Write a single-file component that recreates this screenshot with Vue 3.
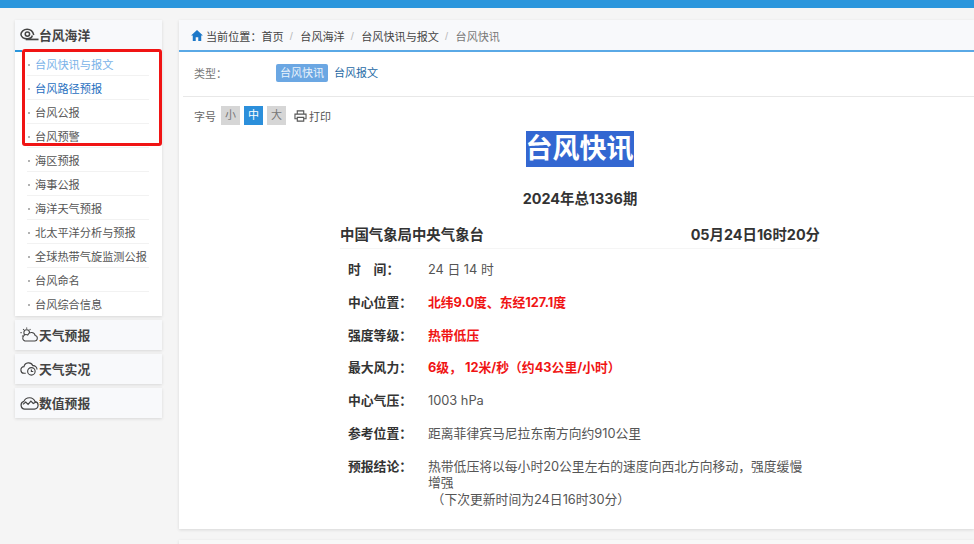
<template>
  <div class="page">
    <div class="topbar"></div>
    <div class="wrap">
      <aside class="side">
        <div class="group open">
          <div class="group-head">
            <svg class="head-icon" viewBox="0 0 20 14" fill="none" stroke="#444" stroke-width="1.6">
              <path d="M14.500 7.500C13.500 3.500 10.500 1.500 7.500 1.500 4 1.500 1 4 1 6.800c0 2.700 3 4.700 6.500 4.700 3 0 5-1.500 5.500-3.500" />
              <circle cx="7.800" cy="6.600" r="2.300" />
              <path d="M6 12.200h13.500" stroke-width="1.800" />
            </svg>
            <span>台风海洋</span>
          </div>
          <ul class="menu">
            <li v-for="(item, i) in menu" :key="item" :class="{ hover: i === 0, active: i === 1 }">{{ item }}</li>
          </ul>
          <div class="mark"></div>
        </div>
        <div class="group">
          <div class="group-head">
            <svg class="head-icon" viewBox="0 0 20 16" fill="none" stroke="#444" stroke-width="1.100">
              <circle cx="7" cy="6" r="3" />
              <path d="M7 .6v1.200M1.600 6H.4M3.200 2.200l.9.9M2 10l1-.8M11 2.200l-.8.9" />
              <path d="M5 15h10.500a3 3 0 0 0 .6-5.900 4.200 4.200 0 0 0-8-.6A3.300 3.300 0 0 0 5 15z" fill="#f8f9fb" />
            </svg>
            <span>天气预报</span>
          </div>
        </div>
        <div class="group">
          <div class="group-head">
            <svg class="head-icon" viewBox="0 0 20 16" fill="none" stroke="#444" stroke-width="1.200">
              <path d="M6 13H4.500a3.500 3.500 0 0 1-.4-7A5 5 0 0 1 13.600 5a4 4 0 0 1 4.400 4" />
              <circle cx="12" cy="11" r="4" />
              <path d="M12 9v2.200h2" />
            </svg>
            <span>天气实况</span>
          </div>
        </div>
        <div class="group">
          <div class="group-head">
            <svg class="head-icon" viewBox="0 0 20 16" fill="none" stroke="#444" stroke-width="1.300">
              <path d="M5 15h10a4 4 0 0 0 1-7.900A6.500 6.500 0 0 0 4 6.800 4.200 4.200 0 0 0 5 15z" />
              <path d="M3 10l3-2.500 2.500 2.500 3-3.500 2.500 2.500 3-1.500" />
            </svg>
            <span>数值预报</span>
          </div>
        </div>
        <div class="red-box"></div>
      </aside>

      <main class="content">
        <section class="card">
          <div class="crumbs">
            <svg class="home" viewBox="0 0 14 13"><path fill="#1d78c8" d="M7 0 0 6.500h2V13h3.500V8.500h3V13H12V6.500h2z" /></svg>
            <span class="crumb-label">当前位置：</span>
            <span>首页</span><i>/</i>
            <span>台风海洋</span><i>/</i>
            <span>台风快讯与报文</span><i>/</i>
            <span class="last">台风快讯</span>
          </div>
          <div class="types">
            <span class="type-label">类型：</span>
            <span class="tag on">台风快讯</span>
            <span class="tag">台风报文</span>
          </div>
          <div class="tools">
            <span class="tool-label">字号</span>
            <span class="size">小</span>
            <span class="size on">中</span>
            <span class="size">大</span>
            <svg class="printer" viewBox="0 0 14 13" fill="none" stroke="#555" stroke-width="1.200">
              <path d="M3.500 4V1h7v3M3.500 9.500H1V4.500h12v5h-2.500" />
              <path d="M3.500 8h7v4h-7z" />
            </svg>
            <span class="print">打印</span>
          </div>

          <article class="report">
            <h1><span>台风快讯</span></h1>
            <h2>2024年总1336期</h2>
            <div class="source">
              <span>中国气象局中央气象台</span>
              <span>05月24日16时20分</span>
            </div>
            <dl class="rows">
              <div v-for="row in rows" :key="row.label" class="row">
                <dt>{{ row.label }}</dt>
                <dd :class="{ warn: row.warn }">{{ row.value }}</dd>
              </div>
              <div class="row">
                <dt>预报结论：</dt>
                <dd>热带低压将以每小时20公里左右的速度向西北方向移动，强度缓慢增强<br />&nbsp;（下次更新时间为24日16时30分）</dd>
              </div>
            </dl>
          </article>
        </section>
        <div class="card next"></div>
      </main>
    </div>
  </div>
</template>

<script setup>
const menu = ['台风快讯与报文', '台风路径预报', '台风公报', '台风预警', '海区预报', '海事公报', '海洋天气预报', '北太平洋分析与预报', '全球热带气旋监测公报', '台风命名', '台风综合信息']

const rows = [
  { label: '时　间：', value: '24 日 14 时' },
  { label: '中心位置：', value: '北纬9.0度、东经127.1度', warn: true },
  { label: '强度等级：', value: '热带低压', warn: true },
  { label: '最大风力：', value: '6级， 12米/秒（约43公里/小时）', warn: true },
  { label: '中心气压：', value: '1003 hPa' },
  { label: '参考位置：', value: '距离菲律宾马尼拉东南方向约910公里' },
]
</script>

<style>
html, body { margin: 0; background: #f5f5f5; }
</style>

<style scoped>
.page {
  height: 544px;
  overflow: hidden;
  background: #f5f5f5;
  color: #333;
  font: 12px "Liberation Sans", "Noto Sans CJK SC", sans-serif;
}
.topbar { height: 8px; background: #2b96dc; }
.wrap { display: flex; gap: 17px; padding: 12px 0 0 15px; }

.side { position: relative; width: 147px; flex: none; display: flex; flex-direction: column; gap: 4px; }
.group { position: relative; background: #f8f9fb; box-shadow: 0 1px 3px rgba(0,0,0,.12); }
.group.open { background: #fff; }
.group-head {
  display: flex; align-items: center;
  box-sizing: border-box;
  height: 30px; padding: 0 0 2px 5px;
  font-size: 12.8px; font-weight: bold; color: #444;
  background: #f8f9fb;
}
.head-icon { width: 19px; height: 15px; flex: none; }
.menu { list-style: none; margin: 0; padding: 2px 13px 0 12px; }
.menu li {
  position: relative;
  height: 24px; line-height: 26px;
  padding-left: 8px;
  font-size: 11.2px; color: #555;
  white-space: nowrap;
  border-bottom: 1px solid #f2f2f2;
  box-sizing: border-box;
}
.menu li:last-child { border-bottom: 0; }
.menu li::before {
  content: ""; position: absolute; left: 1px; top: 12px;
  width: 2px; height: 2px; background: #999; border-radius: 50%;
}
.menu li.hover { color: #79b2e8; }
.menu li.active { color: #1f6fc0; }
.mark { position: absolute; left: 0; top: 30px; width: 7px; height: 2px; background: #2b96dc; }
.red-box {
  position: absolute; left: 7px; top: 29px;
  width: 134px; height: 91px;
  border: 3px solid #f01414; border-radius: 3px;
}

.content { flex: 1; min-width: 0; display: flex; flex-direction: column; gap: 11px; }
.card { background: #fff; box-shadow: 0 1px 3px rgba(0,0,0,.12); }
.next { height: 30px; background: #f8f8f8; }

.crumbs {
  display: flex; align-items: center;
  height: 32px; padding: 1px 0 0 12px;
  box-sizing: border-box;
  background: #f8f9fb;
  border-bottom: 2px solid #5aa9e6;
  font-size: 11.1px; color: #444;
}
.home { width: 12px; height: 11px; margin-right: 3px; }
.crumbs i { font-style: normal; color: #bbb; margin: 0 7.5px 0 6px; }
.crumbs .last { color: #777; }

.types {
  display: flex; align-items: center;
  height: 45px; margin-left: 4px; padding: 0 0 3px 11px;
  box-sizing: border-box;
  border-bottom: 1px solid #e8e8e8;
  font-size: 11px; color: #1f6aa5;
}
.type-label { width: 82px; color: #777; }
.tag { height: 18px; line-height: 18px; padding: 0 4px 0 1px; }
.tag.on { padding: 0 4px; margin-right: 5px; background: #6ba7e3; color: #e8f2fb; border-radius: 2px; }

.tools { display: flex; align-items: center; gap: 3px; height: 37px; padding: 0 0 0 15px; box-sizing: border-box; font-size: 11px; color: #666; }
.tool-label { margin-right: 2px; }
.size { width: 19px; height: 19px; line-height: 19px; text-align: center; background: #d6d6d6; color: #777; margin-right: 1px; }
.size.on { background: #2b8fdb; color: #fff; }
.printer { width: 13px; height: 12px; margin-left: 4px; }
.print { color: #555; margin-left: -1px; }

.report { padding-bottom: 10px; font-family: Inter, "Noto Sans CJK SC", sans-serif; }
.report h1 { margin: -3px 0 0; height: 36px; line-height: 36px; text-align: center; font-size: 27px; position: relative; left: 3px; }
.report h1 span { display: inline-block; background: #3367d1; color: #fff; }
.report h2 { margin: 20px 0 0; height: 24px; line-height: 24px; text-align: center; font-size: 14.4px; color: #333; padding-left: 7px; }
.source {
  display: flex; justify-content: space-between;
  width: 480px; margin: 11px 0 0 161px;
  height: 26px; line-height: 26px;
  font-size: 14.4px; font-weight: bold; color: #333;
  border-bottom: 1px solid #f5f5f5;
}
.rows { width: 456px; margin: 7px 0 0 169px; font-size: 12.8px; }
.row { display: flex; margin: 0; padding: 6px 0 10.2px; line-height: 16.6px; }
dt { width: 80px; flex: none; font-weight: bold; color: #333; }
dd { margin: 0; width: 380px; flex: none; color: #555; }
dd.warn { color: #f01414; font-weight: bold; }
</style>
